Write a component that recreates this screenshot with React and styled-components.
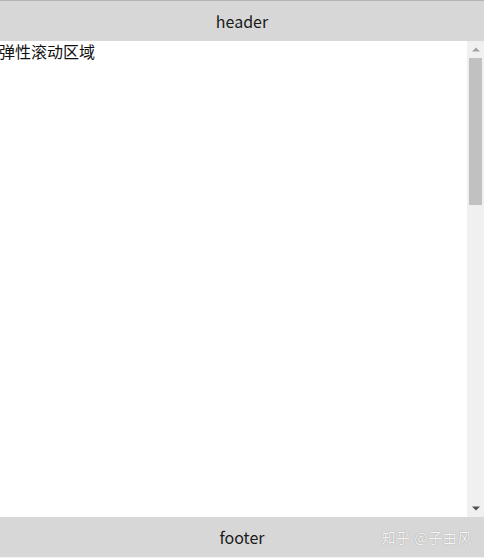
import React from "react";
import styled, { createGlobalStyle } from "styled-components";

const Global = createGlobalStyle`
  html, body { margin: 0; padding: 0; background: #fff; }
  body { font-family: "Noto Sans CJK SC", "Noto Sans", sans-serif; }
`;

const Page = styled.div`
  width: 486px;
  height: 558px;
  display: flex;
  flex-direction: column;
  background: #fff;
`;

const Bar = styled.div`
  position: relative;
  flex: none;
  height: 40px;
  width: 484px;
  background: #d7d7d7;
  display: flex;
  align-items: center;
  justify-content: center;
  font-size: 16px;
  color: #1a1a1a;
  border-top: ${(p) => (p.$top ? "1px solid #b4b4b4" : "none")};
`;

const Middle = styled.div`
  flex: 1;
  min-height: 0;
  width: 484px;
  display: flex;
`;

const Scroller = styled.div`
  flex: 1;
  overflow-y: auto;
  background: #fff;
  scrollbar-width: none;
  &::-webkit-scrollbar { display: none; }
`;

const Content = styled.div`
  height: 1431px;
  margin-left: -1px;
  font-size: 16px;
  line-height: 20px;
  color: #111;
`;

const Track = styled.div`
  flex: none;
  width: 17px;
  background: #f0f0f0;
  display: flex;
  flex-direction: column;
`;

const ArrowButton = styled.div`
  flex: none;
  height: 17px;
  display: flex;
  align-items: center;
  justify-content: center;
`;

const Rail = styled.div`
  flex: 1;
  display: flex;
  flex-direction: column;
  padding: 0 2px;
`;

const Thumb = styled.div`
  flex: none;
  height: 147px;
  background: #c1c1c1;
`;

const Watermark = styled.span`
  position: absolute;
  right: 12px;
  top: 50%;
  transform: translateY(-50%);
  font-size: 14px;
  color: rgba(255, 255, 255, 0.92);
  text-shadow: 0 0 1px rgba(110, 110, 110, 0.75);
  letter-spacing: 0.6px;
`;

const Bottom = styled.div`
  flex: none;
  height: 1px;
  background: #eef6f4;
`;

const Arrow = ({ down, color }) => (
  <svg width="8" height="5" viewBox="0 0 8 5">
    {down ? (
      <polygon points="0,0.5 8,0.5 4,4.5" fill={color} />
    ) : (
      <polygon points="4,0.5 8,4.5 0,4.5" fill={color} />
    )}
  </svg>
);

export default function App() {
  return (
    <>
      <Global />
      <Page>
        <Bar $top>header</Bar>
        <Middle>
          <Scroller>
            <Content>弹性滚动区域</Content>
          </Scroller>
          <Track>
            <ArrowButton>
              <Arrow color="#a3a3a3" />
            </ArrowButton>
            <Rail>
              <Thumb />
            </Rail>
            <ArrowButton>
              <Arrow down color="#505050" />
            </ArrowButton>
          </Track>
        </Middle>
        <Bar>
          footer
          <Watermark>知乎 @子由风</Watermark>
        </Bar>
        <Bottom />
      </Page>
    </>
  );
}
